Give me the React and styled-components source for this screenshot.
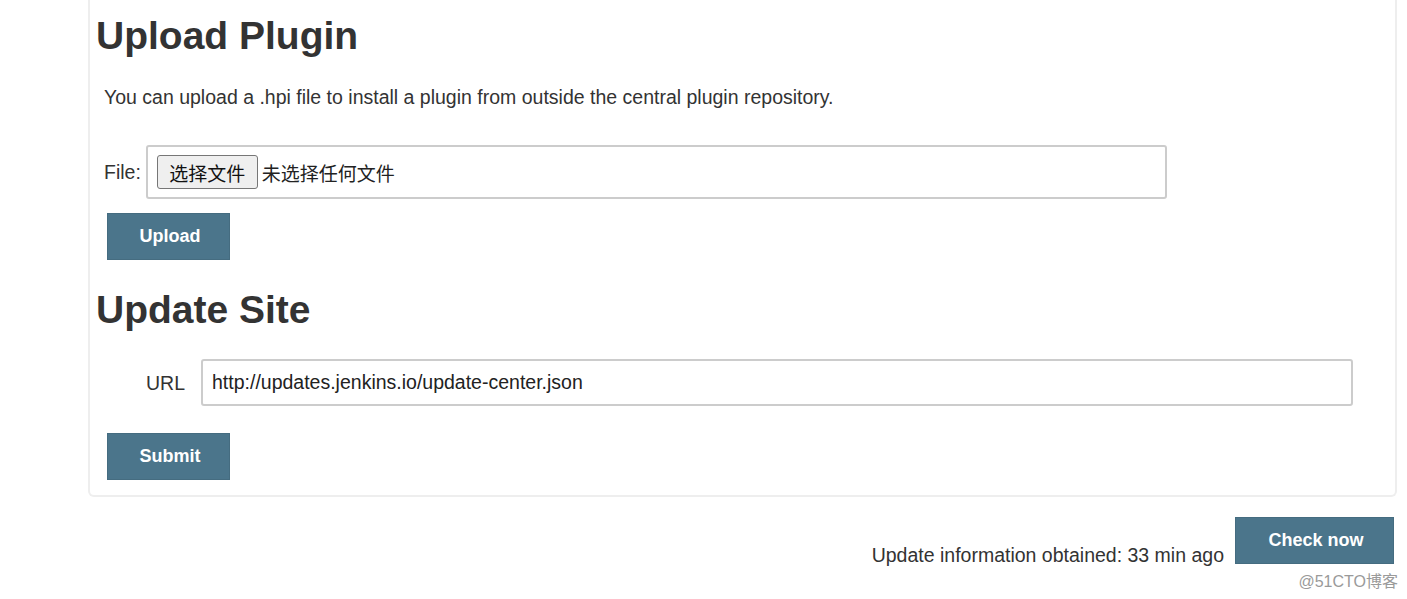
import React from 'react';
import styled, { createGlobalStyle } from 'styled-components';

const GlobalStyle = createGlobalStyle`
    body {
        margin: 0;
        background: #fff;
        font-family: "Liberation Sans", Arial, "Noto Sans CJK SC", sans-serif;
        font-size: 19.5px;
        color: #333;
    }
`;

const Page = styled.div`
    position: relative;
    width: 1407px;
    height: 599px;
    padding-left: 88px;
    box-sizing: border-box;
    overflow: hidden;
`;

const Panel = styled.div`
    width: 1309px;
    box-sizing: border-box;
    border: 2px solid #eee;
    border-top: none;
    border-radius: 0 0 6px 6px;
    padding: 13px 0 15px 6px;
`;

const Heading = styled.h1`
    margin: ${p => p.$top || 0}px 0 0;
    font-size: 39px;
    line-height: 45px;
    font-weight: bold;
    color: #333;
`;

const Note = styled.p`
    margin: 28px 0 0;
    padding-left: 8px;
    line-height: 22px;
`;

const Row = styled.div`
    display: flex;
    align-items: center;
    margin-top: 27px;
    padding-left: ${p => p.$indent}px;
    gap: ${p => p.$gap}px;
`;

const Label = styled.span`
    line-height: 22px;
`;

const FileBox = styled.div`
    display: flex;
    align-items: center;
    width: 1021px;
    height: 54px;
    box-sizing: border-box;
    border: 2px solid #ccc;
    border-radius: 3px;
    padding-left: 9px;
`;

const ChooseButton = styled.span`
    display: flex;
    align-items: center;
    justify-content: center;
    width: 101px;
    height: 34px;
    box-sizing: border-box;
    background: #efefef;
    border: 1px solid #767676;
    border-radius: 3px;
    color: #111;
    font-family: "Noto Sans CJK SC", sans-serif;
    font-size: 19px;
`;

const NoFile = styled.span`
    margin-left: 4px;
    color: #222;
    font-family: "Noto Sans CJK SC", sans-serif;
    font-size: 19px;
`;

const UrlInput = styled.div`
    display: flex;
    align-items: center;
    width: 1152px;
    height: 47px;
    box-sizing: border-box;
    border: 2px solid #ccc;
    border-radius: 3px;
    padding: 0 9px;
    color: #222;
`;

const Button = styled.button`
    display: block;
    width: ${p => p.$width || 123}px;
    height: 47px;
    margin: ${p => p.$top || 0}px 0 0 ${p => p.$left || 0}px;
    padding: 0 0 0 3px;
    background: #4b758b;
    border: 1px solid #456c80;
    color: #fff;
    font-family: "Liberation Sans", Arial, sans-serif;
    font-size: 18px;
    font-weight: bold;
`;

const Footer = styled.div`
    display: flex;
    justify-content: flex-end;
    align-items: flex-end;
    gap: 11px;
    width: 1310px;
    box-sizing: border-box;
    margin-top: 20px;
    padding-right: 4px;
`;

const Info = styled.span`
    line-height: 22px;
    margin-bottom: -2px;
`;

const Watermark = styled.div`
    position: absolute;
    right: 9px;
    top: 568px;
    font-family: "Liberation Sans", Arial, "Noto Sans CJK SC", sans-serif;
    font-size: 16px;
    color: #9a9a9a;
`;

export default function App() {
    return (
        <Page>
            <GlobalStyle />
            <Panel>
                <Heading>Upload Plugin</Heading>
                <Note>You can upload a .hpi file to install a plugin from outside the central plugin repository.</Note>
                <Row $indent={8} $gap={5} style={{ marginTop: 37 }}>
                    <Label>File:</Label>
                    <FileBox>
                        <ChooseButton>选择文件</ChooseButton>
                        <NoFile>未选择任何文件</NoFile>
                    </FileBox>
                </Row>
                <Button $top={14} $left={11}>Upload</Button>
                <Heading $top={27}>Update Site</Heading>
                <Row $indent={50} $gap={16}>
                    <Label>URL</Label>
                    <UrlInput>http://updates.jenkins.io/update-center.json</UrlInput>
                </Row>
                <Button $top={27} $left={11}>Submit</Button>
            </Panel>
            <Footer>
                <Info>Update information obtained: 33 min ago</Info>
                <Button $width={159}>Check now</Button>
            </Footer>
            <Watermark>@51CTO博客</Watermark>
        </Page>
    );
}
